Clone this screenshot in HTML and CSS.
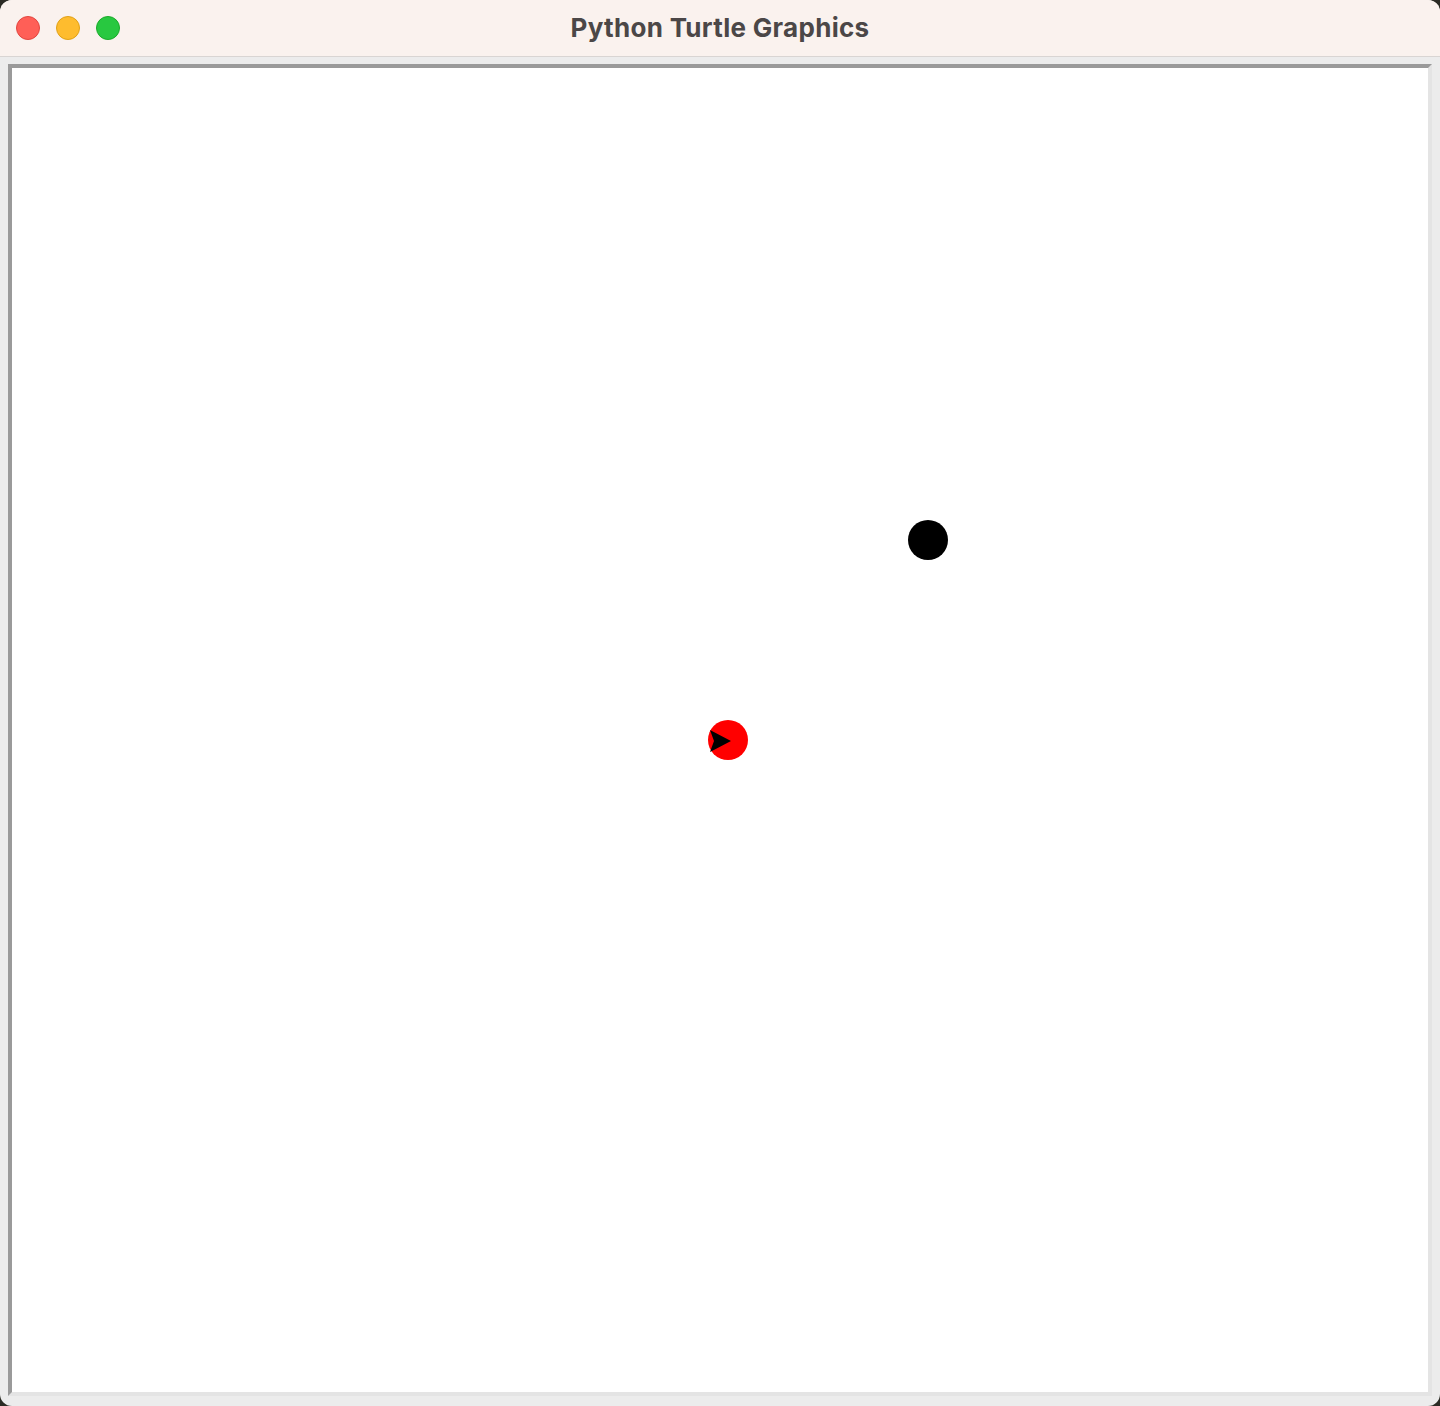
FILE: index.html
```html
<!DOCTYPE html>
<html>
<head>
<meta charset="utf-8">
<title>Python Turtle Graphics</title>
<link rel="stylesheet" href="styles.css">
</head>
<body>
<div class="window">
  <div class="titlebar">
    <div class="lights">
      <span class="light red"></span>
      <span class="light yellow"></span>
      <span class="light green"></span>
    </div>
    <div class="title">Python Turtle Graphics</div>
  </div>
  <div class="content">
    <div class="canvas">
      <svg class="scene" width="1416" height="1324" viewBox="0 0 1416 1324" xmlns="http://www.w3.org/2000/svg">
        <circle cx="916" cy="472" r="20" fill="#000"/>
        <circle cx="716" cy="672" r="20" fill="#ff0000"/>
        <polygon points="719,673 698,662 702,673 698,684" fill="#000"/>
      </svg>
    </div>
  </div>
</div>
</body>
</html>
```

FILE: styles.css
```css
html, body {
  margin: 0;
  padding: 0;
}
body {
  width: 1440px;
  height: 1406px;
  background: #2b2b24;
  overflow: hidden;
  font-family: Inter, "Liberation Sans", sans-serif;
}
.window {
  width: 1440px;
  height: 1406px;
  border-radius: 12px;
  overflow: hidden;
  background: #ececec;
  display: flex;
  flex-direction: column;
}
.titlebar {
  position: relative;
  height: 56px;
  flex: none;
  background: #faf2ee;
  border-bottom: 1px solid #d9d5d3;
  display: flex;
  align-items: center;
  justify-content: center;
}
.lights {
  position: absolute;
  left: 16px;
  top: 16px;
  display: flex;
  gap: 16px;
}
.light {
  width: 24px;
  height: 24px;
  border-radius: 50%;
  box-sizing: border-box;
}
.red { background: #ff5f57; border: 1px solid #e2463f; }
.yellow { background: #febc2e; border: 1px solid #e1a116; }
.green { background: #28c840; border: 1px solid #1aab29; }
.title {
  font-size: 26px;
  font-weight: 700;
  color: #4b4747;
  letter-spacing: 0.3px;
  margin-top: -2px;
}
.content {
  flex: 1;
  padding: 7px 8px 0 8px;
}
.canvas {
  width: 1416px;
  height: 1324px;
  background: #ffffff;
  border-top: 4px solid #9a9a9a;
  border-left: 4px solid #9a9a9a;
  border-right: 4px solid #e4e4e4;
  border-bottom: 4px solid #e4e4e4;
}
.scene {
  display: block;
}
```
